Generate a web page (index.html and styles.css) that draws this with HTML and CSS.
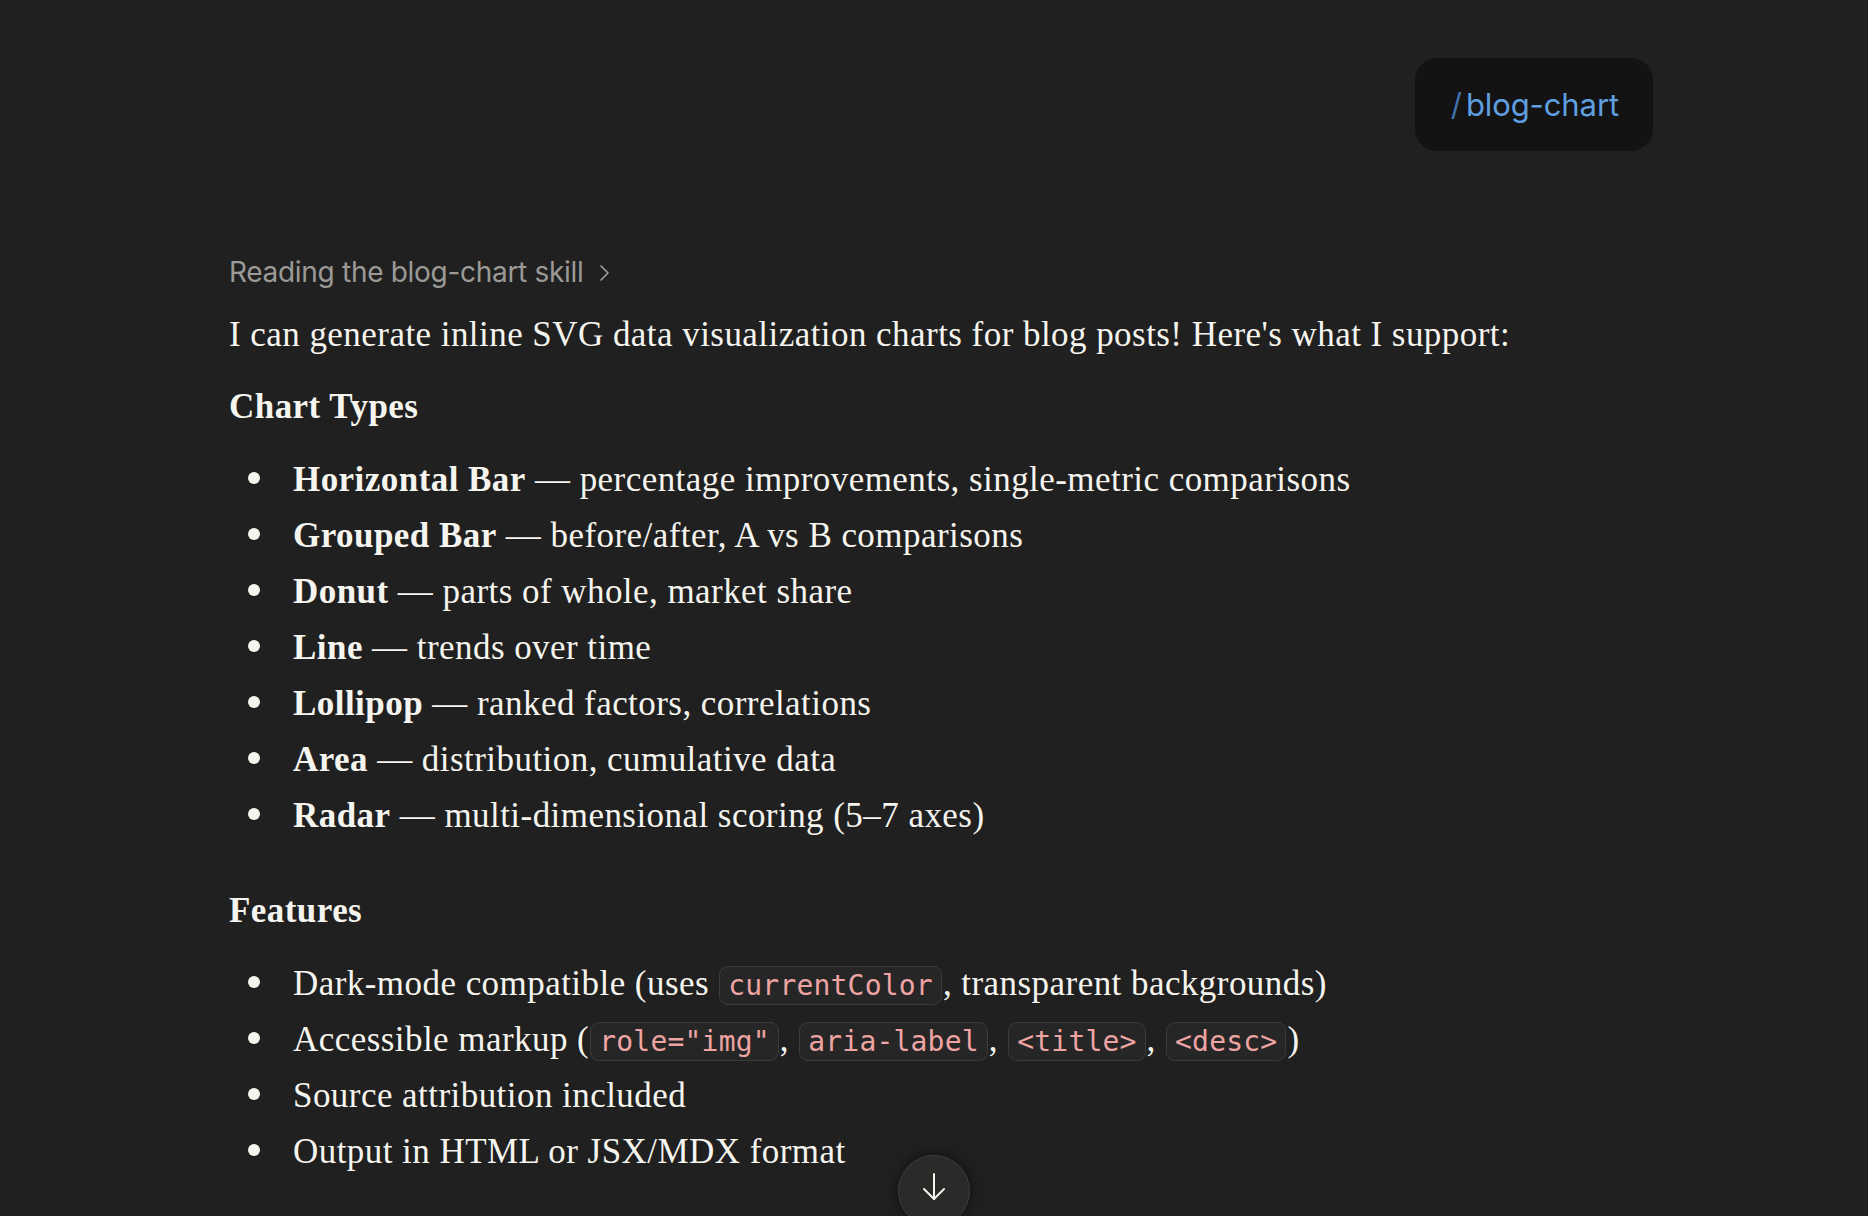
FILE: index.html
```html
<!DOCTYPE html>
<html lang="en">
<head>
    <meta charset="UTF-8">
    <meta name="viewport" content="width=device-width, initial-scale=1.0">
    <title>blog-chart</title>
    <link rel="stylesheet" href="styles.css">
</head>
<body>

    <div class="thread">
        <!-- Message de l'utilisateur -->
        <div class="user-row">
            <div class="user-msg"><span class="slash">/</span>blog-chart</div>
        </div>

        <!-- Réponse -->
        <div class="reply">
            <div class="skill-line">Reading the blog-chart skill
                <svg class="chevron" width="14" height="20" viewBox="0 0 14 20" fill="none" stroke="currentColor" stroke-width="1.7" stroke-linecap="round" stroke-linejoin="round">
                    <path d="M4 3l7 7-7 7"/>
                </svg>
            </div>

            <p>I can generate inline SVG data visualization charts for blog posts! Here's what I support:</p>

            <h3>Chart Types</h3>
            <ul>
                <li><strong>Horizontal Bar</strong> — percentage improvements, single-metric comparisons</li>
                <li><strong>Grouped Bar</strong> — before/after, A vs B comparisons</li>
                <li><strong>Donut</strong> — parts of whole, market share</li>
                <li><strong>Line</strong> — trends over time</li>
                <li><strong>Lollipop</strong> — ranked factors, correlations</li>
                <li><strong>Area</strong> — distribution, cumulative data</li>
                <li><strong>Radar</strong> — multi-dimensional scoring (5–7 axes)</li>
            </ul>

            <h3 class="spaced">Features</h3>
            <ul>
                <li>Dark-mode compatible (uses <code>currentColor</code>, transparent backgrounds)</li>
                <li>Accessible markup (<code>role="img"</code>, <code>aria-label</code>, <code>&lt;title&gt;</code>, <code>&lt;desc&gt;</code>)</li>
                <li>Source attribution included</li>
                <li>Output in HTML or JSX/MDX format</li>
            </ul>
        </div>
    </div>

    <button class="scroll-down" aria-label="Scroll down">
        <svg width="24" height="30" viewBox="0 0 24 30" fill="none" stroke="currentColor" stroke-width="2" stroke-linecap="round" stroke-linejoin="round">
            <path d="M12 2v25"/>
            <path d="M2 17l10 10 10-10"/>
        </svg>
    </button>

</body>
</html>
```

FILE: styles.css
```css
/* Page */
body {
    background: #202020;
    color: #f5f4ee;
    font-family: 'Liberation Serif', 'Times New Roman', serif;
    margin: 0;
    padding: 0;
    height: 100vh;
    overflow: hidden;
}

/* Colonne centrale */
.thread {
    max-width: 1438px;
    margin: 0 auto;
    padding-top: 58px;
}

/* Message utilisateur */
.user-row {
    display: flex;
    justify-content: flex-end;
}

.user-msg {
    background: #131313;
    border-radius: 22px;
    height: 93px;
    padding: 0 34px 0 36px;
    display: flex;
    align-items: center;
    font-family: 'Inter', 'Liberation Sans', sans-serif;
    font-size: 31px;
    color: #5f9fe0;
    letter-spacing: -0.1px;
}

.user-msg .slash {
    color: #3f72ad;
    margin-right: 4px;
}

/* Réponse */
.reply {
    padding-left: 14px;
    margin-top: 102px;
    font-size: 35px;
    letter-spacing: 0.45px;
}

.skill-line {
    font-family: 'Inter', 'Liberation Sans', sans-serif;
    font-size: 28px;
    line-height: 38px;
    color: #9b9a96;
    letter-spacing: -0.3px;
}

.chevron {
    margin-left: 6px;
    vertical-align: -1px;
}

p {
    margin: 16px 0 0;
    line-height: 56px;
}

h3 {
    font-size: 35px;
    font-weight: 700;
    line-height: 56px;
    margin: 16px 0 0;
}

h3.spaced {
    margin-top: 39px;
}

ul {
    list-style: none;
    margin: 17px 0 0;
    padding: 0;
}

li {
    line-height: 56px;
    padding-left: 64px;
}

li::before {
    content: "";
    display: inline-block;
    width: 12px;
    height: 12px;
    border-radius: 50%;
    background: #f5f4ee;
    margin-left: -45px;
    margin-right: 33px;
    vertical-align: 7.5px;
}

strong {
    font-weight: 700;
}

code {
    font-family: 'DejaVu Sans Mono', 'Liberation Mono', monospace;
    font-size: 28px;
    line-height: 1;
    letter-spacing: 0.2px;
    color: #eea4a2;
    background: #262626;
    border: 1px solid #3b3b3a;
    border-radius: 9px;
    padding: 2px 8px;
    margin: 0 1px;
}

/* Bouton de défilement */
.scroll-down {
    position: fixed;
    left: 50%;
    bottom: -11px;
    transform: translateX(-50%);
    width: 72px;
    height: 72px;
    border-radius: 50%;
    background: #2a2a29;
    border: 1px solid #3e3e3c;
    box-shadow: 0 0 14px rgba(0, 0, 0, 0.55);
    color: #f5f4ee;
    display: flex;
    align-items: center;
    justify-content: center;
    padding: 0 0 8px;
}
```
